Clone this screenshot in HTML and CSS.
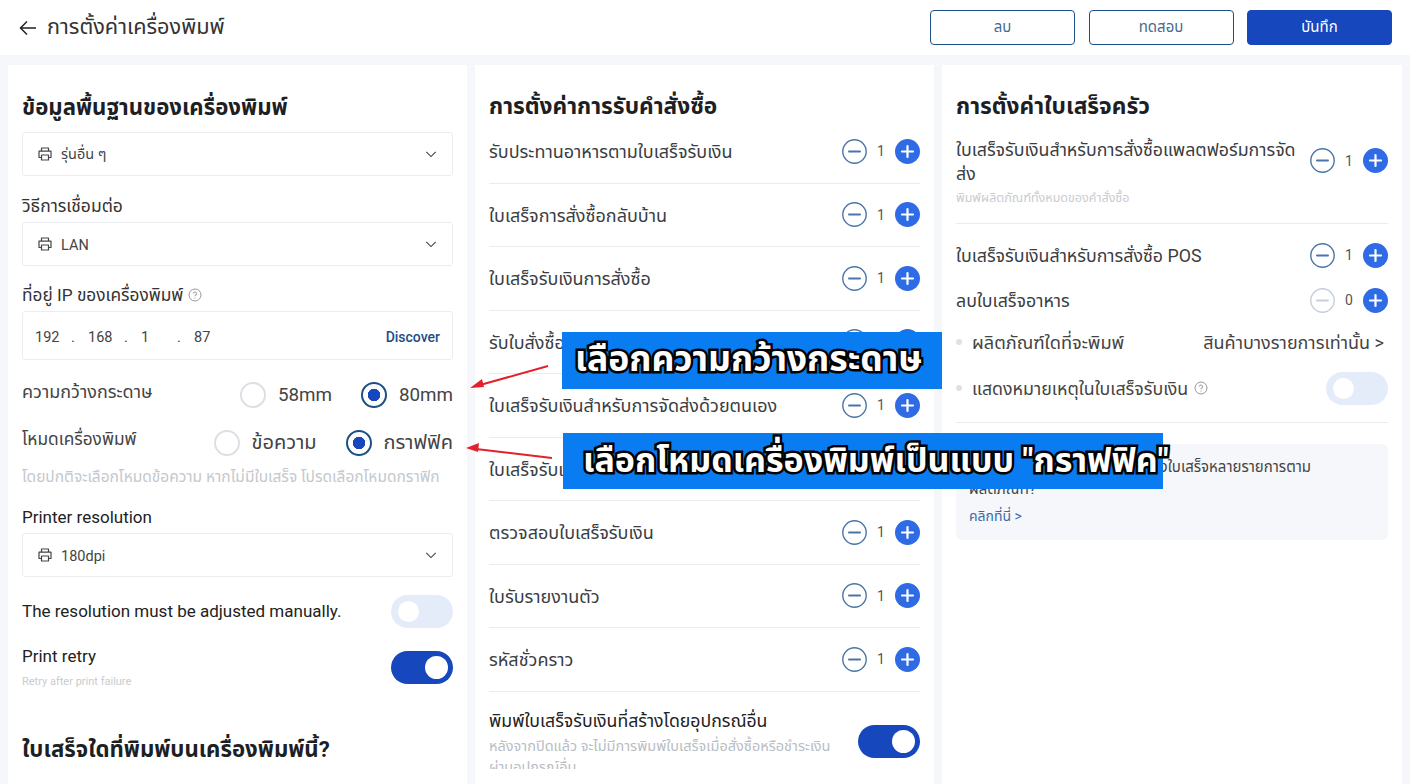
FILE: index.html
```html
<!DOCTYPE html>
<html lang="th">
<head>
    <meta charset="UTF-8">
    <meta name="viewport" content="width=device-width, initial-scale=1.0">
    <title>การตั้งค่าเครื่องพิมพ์</title>
    <link rel="stylesheet" href="styles.css">
</head>
<body>
    <svg class="icon-defs" width="0" height="0">
        <symbol id="printer" viewBox="0 0 16 16">
            <path d="M4.5 5V2h7v3M4.5 11.5H2V5.2h12v6.300h-2.500M4.500 9h7v5h-7z" fill="none" stroke="currentColor" stroke-width="1.200" stroke-linejoin="round"/>
        </symbol>
        <symbol id="chevron" viewBox="0 0 14 14">
            <path d="M1.500 4.500L7 10l5.500-5.500" fill="none" stroke="currentColor" stroke-width="1.300"/>
        </symbol>
        <symbol id="minus" viewBox="0 0 25 25">
            <circle cx="12.500" cy="12.500" r="11.700" fill="none" stroke="currentColor" stroke-width="1.400"/>
            <path d="M7 12.500h11" stroke="currentColor" stroke-width="2" stroke-linecap="round"/>
        </symbol>
        <symbol id="plus" viewBox="0 0 25 25">
            <circle cx="12.500" cy="12.500" r="12.500" fill="#2f6be4"/>
            <path d="M7 12.500h11M12.500 7v11" stroke="#fff" stroke-width="2.200" stroke-linecap="round"/>
        </symbol>
        <symbol id="help" viewBox="0 0 14 14">
            <circle cx="7" cy="7" r="6" fill="none" stroke="currentColor"/>
            <path d="M5.300 5.600A1.700 1.700 0 1 1 7 7.400v.8M7 9.500v1" fill="none" stroke="currentColor"/>
        </symbol>
    </svg>

    <header class="topbar">
        <div class="topbar-title">
            <svg class="back-icon" width="20" height="20" viewBox="0 0 20 20"><path d="M18 10H2.500M9 3.500L2.500 10 9 16.500" fill="none" stroke="currentColor" stroke-width="1.500"/></svg>
            <span>การตั้งค่าเครื่องพิมพ์</span>
        </div>
        <div class="topbar-actions">
            <button class="btn">ลบ</button>
            <button class="btn">ทดสอบ</button>
            <button class="btn btn-primary">บันทึก</button>
        </div>
    </header>

    <main class="columns">
        <section class="card">
            <h2 class="card-title">ข้อมูลพื้นฐานของเครื่องพิมพ์</h2>
            <div class="select">
                <svg class="select-icon"><use href="#printer"/></svg>
                <span class="select-text">รุ่นอื่น ๆ</span>
                <svg class="select-arrow"><use href="#chevron"/></svg>
            </div>
            <div class="field-label label-connect">วิธีการเชื่อมต่อ</div>
            <div class="select">
                <svg class="select-icon"><use href="#printer"/></svg>
                <span class="select-text">LAN</span>
                <svg class="select-arrow"><use href="#chevron"/></svg>
            </div>
            <div class="field-label label-ip">ที่อยู่ IP ของเครื่องพิมพ์ <svg class="help"><use href="#help"/></svg></div>
            <div class="ip-box">
                <span class="ip-part">192</span><span class="ip-dot">.</span>
                <span class="ip-part">168</span><span class="ip-dot">.</span>
                <span class="ip-part">1</span><span class="ip-dot">.</span>
                <span class="ip-part">87</span>
                <span class="discover">Discover</span>
            </div>
            <div class="radio-row paper-row">
                <span class="radio-label paper-label">ความกว้างกระดาษ</span>
                <div class="radio-group">
                    <span class="radio"></span><span class="radio-text">58mm</span>
                    <span class="radio radio-on"></span><span class="radio-text">80mm</span>
                </div>
            </div>
            <div class="radio-row mode-row">
                <span class="radio-label">โหมดเครื่องพิมพ์</span>
                <div class="radio-group">
                    <span class="radio"></span><span class="radio-text radio-text-th">ข้อความ</span>
                    <span class="radio radio-on"></span><span class="radio-text radio-text-th">กราฟฟิค</span>
                </div>
            </div>
            <p class="hint">โดยปกติจะเลือกโหมดข้อความ หากไม่มีใบเสร็จ โปรดเลือกโหมดกราฟิก</p>
            <div class="field-label label-res">Printer resolution</div>
            <div class="select">
                <svg class="select-icon"><use href="#printer"/></svg>
                <span class="select-text">180dpi</span>
                <svg class="select-arrow"><use href="#chevron"/></svg>
            </div>
            <div class="switch-row manual-row">
                <span class="switch-text">The resolution must be adjusted manually.</span>
                <span class="switch"></span>
            </div>
            <div class="switch-row retry-row">
                <div>
                    <div class="switch-text">Print retry</div>
                    <div class="small-note">Retry after print failure</div>
                </div>
                <span class="switch switch-on"></span>
            </div>
            <h2 class="card-title title-second">ใบเสร็จใดที่พิมพ์บนเครื่องพิมพ์นี้?</h2>
        </section>

        <section class="card">
            <h2 class="card-title title-wide">การตั้งค่าการรับคำสั่งซื้อ</h2>
            <div class="rows">
                <div class="count-row"><span>รับประทานอาหารตามใบเสร็จรับเงิน</span><div class="stepper"><svg class="step-minus"><use href="#minus"/></svg><span class="step-num">1</span><svg class="step-plus"><use href="#plus"/></svg></div></div>
                <div class="count-row"><span>ใบเสร็จการสั่งซื้อกลับบ้าน</span><div class="stepper"><svg class="step-minus"><use href="#minus"/></svg><span class="step-num">1</span><svg class="step-plus"><use href="#plus"/></svg></div></div>
                <div class="count-row"><span>ใบเสร็จรับเงินการสั่งซื้อ</span><div class="stepper"><svg class="step-minus"><use href="#minus"/></svg><span class="step-num">1</span><svg class="step-plus"><use href="#plus"/></svg></div></div>
                <div class="count-row"><span>รับใบสั่งซื้อ</span><div class="stepper"><svg class="step-minus"><use href="#minus"/></svg><span class="step-num">1</span><svg class="step-plus"><use href="#plus"/></svg></div></div>
                <div class="count-row"><span>ใบเสร็จรับเงินสำหรับการจัดส่งด้วยตนเอง</span><div class="stepper"><svg class="step-minus"><use href="#minus"/></svg><span class="step-num">1</span><svg class="step-plus"><use href="#plus"/></svg></div></div>
                <div class="count-row"><span>ใบเสร็จรับเงิน</span><div class="stepper"><svg class="step-minus"><use href="#minus"/></svg><span class="step-num">1</span><svg class="step-plus"><use href="#plus"/></svg></div></div>
                <div class="count-row"><span>ตรวจสอบใบเสร็จรับเงิน</span><div class="stepper"><svg class="step-minus"><use href="#minus"/></svg><span class="step-num">1</span><svg class="step-plus"><use href="#plus"/></svg></div></div>
                <div class="count-row"><span>ใบรับรายงานตัว</span><div class="stepper"><svg class="step-minus"><use href="#minus"/></svg><span class="step-num">1</span><svg class="step-plus"><use href="#plus"/></svg></div></div>
                <div class="count-row"><span>รหัสชั่วคราว</span><div class="stepper"><svg class="step-minus"><use href="#minus"/></svg><span class="step-num">1</span><svg class="step-plus"><use href="#plus"/></svg></div></div>
            </div>
            <div class="other-device">
                <div class="other-text">
                    <div class="other-title">พิมพ์ใบเสร็จรับเงินที่สร้างโดยอุปกรณ์อื่น</div>
                    <div class="other-note">หลังจากปิดแล้ว จะไม่มีการพิมพ์ใบเสร็จเมื่อสั่งซื้อหรือชำระเงินผ่านอุปกรณ์อื่น</div>
                </div>
                <span class="switch switch-on"></span>
            </div>
        </section>

        <section class="card">
            <h2 class="card-title title-wide">การตั้งค่าใบเสร็จครัว</h2>
            <div class="kitchen-row kitchen-first">
                <div class="kitchen-text">
                    <div>ใบเสร็จรับเงินสำหรับการสั่งซื้อแพลตฟอร์มการจัดส่ง</div>
                    <div class="tiny-note">พิมพ์ผลิตภัณฑ์ทั้งหมดของคำสั่งซื้อ</div>
                </div>
                <div class="stepper"><svg class="step-minus"><use href="#minus"/></svg><span class="step-num">1</span><svg class="step-plus"><use href="#plus"/></svg></div>
            </div>
            <div class="kitchen-row kitchen-pos">
                <span>ใบเสร็จรับเงินสำหรับการสั่งซื้อ POS</span>
                <div class="stepper"><svg class="step-minus"><use href="#minus"/></svg><span class="step-num">1</span><svg class="step-plus"><use href="#plus"/></svg></div>
            </div>
            <div class="kitchen-row kitchen-delete">
                <span>ลบใบเสร็จอาหาร</span>
                <div class="stepper"><svg class="step-minus step-off"><use href="#minus"/></svg><span class="step-num">0</span><svg class="step-plus"><use href="#plus"/></svg></div>
            </div>
            <div class="sub-row sub-products">
                <span class="bullet"></span>
                <span>ผลิตภัณฑ์ใดที่จะพิมพ์</span>
                <span class="sub-value">สินค้าบางรายการเท่านั้น &gt;</span>
            </div>
            <div class="sub-row sub-note">
                <span class="bullet"></span>
                <span>แสดงหมายเหตุในใบเสร็จรับเงิน</span>
                <svg class="help"><use href="#help"/></svg>
                <span class="switch sub-switch"></span>
            </div>
            <div class="tip-box">
                <div class="tip-text">หากคุณต้องการแยกการพิมพ์ของใบเสร็จหลายรายการตามผลิตภัณฑ์?</div>
                <div class="tip-link">คลิกที่นี่ &gt;</div>
            </div>
        </section>
    </main>

    <!-- annotations drawn on top of the screenshot -->
    <svg class="arrows" width="1410" height="784" viewBox="0 0 1410 784">
        <path d="M548 366L480 385" stroke="#e3202b" stroke-width="2"/>
        <path d="M470 388l12-9 2 8z" fill="#e3202b"/>
        <path d="M552 458L476 449" stroke="#e3202b" stroke-width="2"/>
        <path d="M466 448l13-5-1 9z" fill="#e3202b"/>
    </svg>
    <div class="callout callout-width">เลือกความกว้างกระดาษ</div>
    <div class="callout callout-mode">เลือกโหมดเครื่องพิมพ์เป็นแบบ "กราฟฟิค"</div>
</body>
</html>
```

FILE: styles.css
```css
* {
    box-sizing: border-box;
}
html, body {
    margin: 0;
    height: 784px;
    overflow: hidden;
}
body {
    position: relative;
    background-color: #f5f7fa;
    color: #2b2f36;
    font-family: Roboto, "Noto Sans", "Noto Sans Thai", "DejaVu Sans", sans-serif;
    font-size: 16px;
}
.icon-defs {
    position: absolute;
}

.topbar {
    height: 55px;
    background-color: #fff;
    display: flex;
    align-items: center;
    justify-content: space-between;
    padding: 0 18px;
}
.topbar-title {
    display: flex;
    align-items: center;
    gap: 9px;
    font-size: 21.7px;
    color: #333;
}
.back-icon {
    color: #222;
}
.topbar-actions {
    display: flex;
    gap: 13.5px;
}
.btn {
    width: 145px;
    height: 35px;
    background-color: #fff;
    border: 1.5px solid #1c4f86;
    border-radius: 4px;
    color: #456a8f;
    font-family: inherit;
    font-size: 15px;
}
.btn-primary {
    background-color: #1647bd;
    border-color: #1647bd;
    color: #fff;
}

.columns {
    display: grid;
    grid-template-columns: 459px 459px 460px;
    gap: 8px;
    padding: 10px 8px 0;
}
.card {
    height: 719px;
    background-color: #fff;
    padding: 0 14px;
    overflow: hidden;
}
.card-title {
    margin: 0;
    height: 67px;
    line-height: 84px;
    font-size: 22.2px;
    font-weight: 700;
    color: #1d1f24;
}
.title-wide {
    font-size: 22.7px;
}

.select {
    height: 44px;
    border: 1px solid #e9edf2;
    border-radius: 3px;
    display: flex;
    align-items: center;
    padding: 0 15px 0 14px;
    font-size: 14.5px;
    color: #444;
}
.select-icon {
    width: 16px;
    height: 16px;
    margin-right: 8px;
    color: #444;
}
.select-text {
    margin-top: 2px;
}
.select-arrow {
    width: 12px;
    height: 12px;
    margin-left: auto;
    color: #444;
}
.field-label {
    font-size: 17.5px;
    line-height: 20px;
    color: #333;
}
.label-connect {
    padding-top: 20px;
    height: 46px;
}
.label-ip {
    padding: 18px 0 6px;
    height: 45px;
    display: flex;
    align-items: center;
    gap: 5px;
    font-size: 17.3px;
}
.label-res {
    height: 28px;
    padding-top: 2px;
    font-size: 17px;
    color: #222;
}
.help {
    width: 14px;
    height: 14px;
    color: #999;
    flex-shrink: 0;
}
.ip-box {
    height: 49px;
    border: 1px solid #e9edf2;
    border-radius: 3px;
    display: flex;
    align-items: center;
    padding: 3px 12px 0;
    font-size: 14.5px;
    color: #444;
}
.ip-part {
    width: 36px;
}
.ip-dot {
    width: 17px;
}
.discover {
    margin-left: auto;
    margin-top: -1px;
    font-size: 14px;
    color: #1c4f86;
    font-weight: 500;
}

.radio-row {
    display: flex;
    justify-content: space-between;
    align-items: center;
}
.paper-row {
    height: 50px;
    margin-top: 10px;
}
.mode-row {
    height: 46px;
}
.radio-label {
    font-size: 17.3px;
    color: #444;
    margin-top: -6px;
}
.paper-label {
    font-size: 18px;
}
.radio-group {
    display: flex;
    align-items: center;
}
.radio {
    width: 26px;
    height: 26px;
    border: 2px solid #dcdfe4;
    border-radius: 50%;
    margin-right: 12px;
    margin-left: 29px;
}
.radio-on {
    border-color: #1c4f86;
    background: radial-gradient(circle, #1647bd 0 6px, #fff 6.500px);
}
.radio-text {
    font-size: 18.8px;
    color: #444;
}
.radio-text-th {
    font-size: 20px;
}
.hint {
    margin: 0;
    height: 39px;
    line-height: 22px;
    font-size: 15.5px;
    color: #c4c8ce;
}

.switch-row {
    display: flex;
    justify-content: space-between;
    align-items: center;
}
.manual-row {
    height: 68px;
}
.retry-row {
    height: 42px;
    margin-top: 1px;
}
.switch-text {
    font-size: 17px;
    color: #222;
}
.small-note {
    margin-top: 9px;
    font-size: 11px;
    color: #c9ccd1;
}
.switch {
    position: relative;
    width: 62px;
    height: 33px;
    border-radius: 17px;
    background-color: #e4ecfa;
    flex-shrink: 0;
}
.switch::after {
    content: "";
    position: absolute;
    top: 6px;
    left: 7px;
    width: 21px;
    height: 21px;
    border-radius: 50%;
    background-color: #fff;
}
.switch-on {
    background-color: #1647bd;
}
.switch-on::after {
    left: auto;
    right: 5px;
    top: 5px;
    width: 23px;
    height: 23px;
}
.title-second {
    margin-top: 19px;
}

.rows {
    margin-top: -12px;
}
.count-row {
    height: 63.500px;
    display: flex;
    justify-content: space-between;
    align-items: center;
    border-bottom: 1px solid #e9ebee;
    font-size: 18px;
    color: #3a3d42;
}
.count-row > span {
    margin-top: 3px;
}
.stepper {
    display: flex;
    align-items: center;
    flex-shrink: 0;
}
.step-minus, .step-plus {
    width: 25px;
    height: 25px;
}
.step-minus {
    color: #4a75a8;
}
.step-off {
    color: #c3cfdd;
}
.step-num {
    width: 28px;
    text-align: center;
    font-size: 14px;
    color: #555;
}
.other-device {
    display: flex;
    justify-content: space-between;
    align-items: flex-start;
    gap: 10px;
    padding-top: 17px;
}
.other-device .switch {
    margin-top: 16px;
}
.other-text {
    width: 360px;
}
.other-title {
    font-size: 17.7px;
    line-height: 24px;
    color: #222;
}
.other-note {
    font-size: 14.5px;
    line-height: 21px;
    margin-top: 3px;
    height: 33px;
    overflow: hidden;
    color: #b9bdc4;
}

.kitchen-row {
    display: flex;
    justify-content: space-between;
    align-items: center;
    font-size: 17.8px;
    color: #3a3d42;
}
.kitchen-first {
    height: 92px;
    padding-top: 6px;
    align-items: flex-start;
    border-bottom: 1px solid #e9ebee;
}
.kitchen-first .stepper {
    margin-top: 10px;
}
.kitchen-text {
    width: 345px;
    line-height: 24px;
}
.tiny-note {
    margin-top: 5px;
    line-height: 14px;
    font-size: 12.5px;
    color: #c9ccd1;
}
.kitchen-pos {
    height: 62px;
}
.kitchen-pos > span, .kitchen-delete > span {
    margin-top: 2px;
}
.kitchen-delete {
    height: 28px;
}
.sub-row {
    display: flex;
    align-items: center;
    color: #444;
    font-size: 17.8px;
}
.sub-row > span:not(.bullet):not(.switch) {
    margin-top: 2px;
}
.bullet {
    width: 6px;
    height: 6px;
    border-radius: 50%;
    background-color: #dfe1e5;
    margin-right: 10px;
}
.sub-products {
    height: 56px;
    font-size: 18.2px;
}
.sub-value {
    margin-left: auto;
    margin-right: 4px;
    font-size: 18px;
}
.sub-note {
    height: 36px;
}
.sub-note .help {
    margin-left: 6px;
}
.sub-switch {
    margin-left: auto;
}
.tip-box {
    margin-top: 38px;
    height: 96px;
    background-color: #f5f7fa;
    border-radius: 6px;
    padding: 12px 13px;
    font-size: 15px;
    color: #444;
    position: relative;
}
.tip-box::before {
    content: "";
    position: absolute;
    left: 0;
    right: 0;
    top: -22px;
    border-top: 1px solid #e9ebee;
}
.tip-text {
    width: 345px;
    line-height: 22px;
}
.tip-link {
    margin-top: 5px;
    line-height: 22px;
    font-size: 14px;
    color: #3c6aa8;
}

.arrows {
    position: absolute;
    left: 0;
    top: 0;
    pointer-events: none;
}
.callout {
    position: absolute;
    background-color: #0a7cf2;
    color: #fff;
    font-weight: 700;
    white-space: nowrap;
    -webkit-text-stroke: 5px #000;
    paint-order: stroke fill;
    line-height: 55px;
}
.callout-width {
    left: 562px;
    top: 332px;
    width: 380px;
    height: 57px;
    padding-left: 13px;
    font-size: 35.5px;
}
.callout-mode {
    left: 563px;
    top: 433px;
    width: 600px;
    height: 56px;
    padding-left: 20px;
    font-size: 34px;
}
```
